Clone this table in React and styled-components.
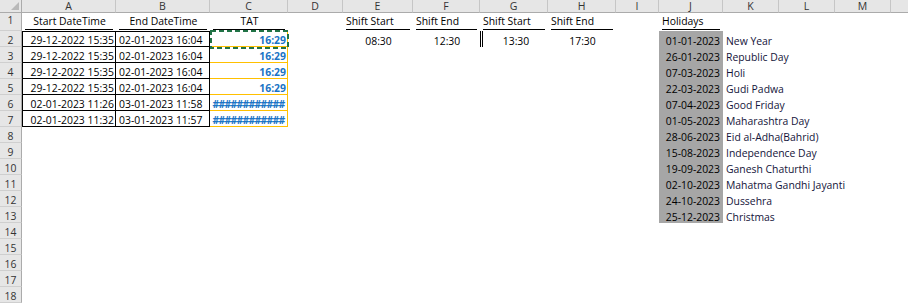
import React from 'react'
import styled, { createGlobalStyle, css } from 'styled-components'

const GlobalStyle = createGlobalStyle`
  html, body {
    margin: 0;
    padding: 0;
    background: #fff;
  }
  body {
    font-family: "Open Sans", "Liberation Sans", sans-serif;
  }
`

// N is only partly on screen, so its letter is not shown
const COLS = [
  { id: 'A', w: 94 },
  { id: 'B', w: 94 },
  { id: 'C', w: 78 },
  { id: 'D', w: 55 },
  { id: 'E', w: 70 },
  { id: 'F', w: 67 },
  { id: 'G', w: 68 },
  { id: 'H', w: 68 },
  { id: 'I', w: 43 },
  { id: 'J', w: 64 },
  { id: 'K', w: 56 },
  { id: 'L', w: 56 },
  { id: 'M', w: 56 },
  { id: 'N', w: 56, hidden: true },
]

const ROW_COUNT = 18
const BLUE = '#1b74c5'
const GOLD = '#ffc000'
const LINE = '1px solid #000'

const holidays = [
  ['01-01-2023', 'New Year'],
  ['26-01-2023', 'Republic Day'],
  ['07-03-2023', 'Holi'],
  ['22-03-2023', 'Gudi Padwa'],
  ['07-04-2023', 'Good Friday'],
  ['01-05-2023', 'Maharashtra Day'],
  ['28-06-2023', 'Eid al-Adha(Bahrid)'],
  ['15-08-2023', 'Independence Day'],
  ['19-09-2023', 'Ganesh Chaturthi'],
  ['02-10-2023', 'Mahatma Gandhi Jayanti'],
  ['24-10-2023', 'Dussehra'],
  ['25-12-2023', 'Christmas'],
]

const times = [
  ['29-12-2022 15:35', '02-01-2023 16:04', '16:29'],
  ['29-12-2022 15:35', '02-01-2023 16:04', '16:29'],
  ['29-12-2022 15:35', '02-01-2023 16:04', '16:29'],
  ['29-12-2022 15:35', '02-01-2023 16:04', '16:29'],
  ['02-01-2023 11:26', '03-01-2023 11:58', '############'],
  ['02-01-2023 11:32', '03-01-2023 11:57', '############'],
]

function buildCells() {
  const cells = {}
  const head = { head: true, ul: true }
  cells.A1 = { ...head, v: 'Start DateTime', align: 'center' }
  cells.B1 = { ...head, v: 'End DateTime', align: 'center' }
  cells.C1 = { ...head, v: 'TAT', align: 'center' }
  cells.E1 = { ...head, v: 'Shift Start' }
  cells.F1 = { ...head, v: 'Shift End' }
  cells.G1 = { ...head, v: 'Shift Start' }
  cells.H1 = { ...head, v: 'Shift End' }
  cells.J1 = { ...head, v: 'Holidays' }

  times.forEach(([start, end, tat], i) => {
    const r = i + 2
    const top = r === 2 ? LINE : undefined
    const hash = tat.startsWith('#')
    cells['A' + r] = { v: start, align: 'right', padR: 1, bt: top, bl: LINE, br: LINE, bb: LINE }
    cells['B' + r] = { v: end, align: 'left', padL: 3, bt: top, br: LINE, bb: LINE }
    cells['C' + r] = {
      v: tat,
      align: hash ? 'center' : 'right',
      padR: 1,
      padL: hash ? 1 : 3,
      bold: true,
      color: BLUE,
      hash,
      br: `1px solid ${GOLD}`,
      bb: `1px solid ${GOLD}`,
      marquee: r === 2,
    }
  })

  cells.E2 = { v: '08:30', align: 'center' }
  cells.F2 = { v: '12:30', align: 'center' }
  cells.G2 = { v: '13:30', align: 'center', bl: '3px double #000' }
  cells.H2 = { v: '17:30', align: 'center' }

  holidays.forEach(([date, name], i) => {
    const r = i + 2
    cells['J' + r] = { v: date, align: 'right', padR: 3, fill: '#a6a6a6' }
    cells['K' + r] = { v: name, color: '#14143a' }
  })
  return cells
}

const CELLS = buildCells()

const Sheet = styled.div`
  width: 908px;
  height: 303px;
  overflow: hidden;
  display: grid;
  grid-template-columns: 22px ${COLS.map((c) => c.w + 'px').join(' ')};
  grid-template-rows: 13px 18px repeat(${ROW_COUNT - 1}, 16px);
  font-size: 10.4px;
  color: #000;
`

const Corner = styled.div`
  position: relative;
  box-sizing: border-box;
  background: #e6e6e6;
  border-right: 1px solid #ababab;
  border-bottom: 1px solid #ababab;
  &::after {
    content: '';
    position: absolute;
    right: 2px;
    bottom: 2px;
    width: 0;
    height: 0;
    border-left: 8px solid transparent;
    border-bottom: 8px solid #b9b9b9;
  }
`

const ColHead = styled.div`
  box-sizing: border-box;
  background: #e6e6e6;
  border-right: 1px solid #c6c6c6;
  border-bottom: 1px solid #ababab;
  display: flex;
  align-items: center;
  justify-content: center;
  font-size: 10.5px;
  line-height: 12px;
  color: #333;
`

const RowHead = styled.div`
  box-sizing: border-box;
  background: #e6e6e6;
  border-right: 1px solid #ababab;
  border-bottom: 1px solid #cfcfcf;
  display: flex;
  align-items: flex-end;
  justify-content: center;
  padding-bottom: ${(p) => (p.$tall ? 4 : 0)}px;
  line-height: 11px;
  color: #333;
`

const justify = { left: 'flex-start', center: 'center', right: 'flex-end' }

const Cell = styled.div`
  position: relative;
  box-sizing: border-box;
  display: flex;
  align-items: flex-end;
  justify-content: ${(p) => justify[p.$align || 'left']};
  padding: 0 ${(p) => p.$padR ?? 2}px ${(p) => (p.$head ? 4 : 0)}px ${(p) => p.$padL ?? 3}px;
  line-height: 11px;
  white-space: nowrap;
  color: ${(p) => p.$color || '#000'};
  font-weight: ${(p) => (p.$bold ? 700 : 400)};
  letter-spacing: ${(p) => (p.$hash ? '-0.7px' : 'normal')};
  background: ${(p) => p.$fill || 'transparent'};
  border-top: ${(p) => p.$bt || 'none'};
  border-right: ${(p) => p.$br || 'none'};
  border-bottom: ${(p) => p.$bb || 'none'};
  border-left: ${(p) => p.$bl || 'none'};
  ${(p) =>
    p.$ul &&
    css`
      &::after {
        content: '';
        position: absolute;
        left: 3px;
        right: 3px;
        bottom: 1px;
        height: 1px;
        background: #000;
      }
    `}
`

const Marquee = styled.svg`
  position: absolute;
  left: 0;
  top: -1px;
  width: 79px;
  height: 19px;
  z-index: 2;
  overflow: visible;
`

function CopyMarquee() {
  return (
    <Marquee viewBox="0 0 79 19">
      <rect x="1" y="1" width="77" height="17" fill="none" stroke="#217346" strokeWidth="2" strokeDasharray="5 3" />
    </Marquee>
  )
}

export default function App() {
  const rows = []
  for (let r = 1; r <= ROW_COUNT; r++) {
    rows.push(
      <React.Fragment key={r}>
        <RowHead $tall={r === 1}>{r}</RowHead>
        {COLS.map((c) => {
          const cell = CELLS[c.id + r]
          if (!cell) return <Cell key={c.id} />
          return (
            <Cell
              key={c.id}
              $align={cell.align}
              $head={cell.head}
              $ul={cell.ul}
              $padL={cell.padL}
              $padR={cell.padR}
              $bold={cell.bold}
              $color={cell.color}
              $hash={cell.hash}
              $fill={cell.fill}
              $bt={cell.bt}
              $br={cell.br}
              $bb={cell.bb}
              $bl={cell.bl}
            >
              {cell.v}
              {cell.marquee && <CopyMarquee />}
            </Cell>
          )
        })}
      </React.Fragment>
    )
  }

  return (
    <>
      <GlobalStyle />
      <Sheet>
        <Corner />
        {COLS.map((c) => (
          <ColHead key={c.id}>{c.hidden ? '' : c.id}</ColHead>
        ))}
        {rows}
      </Sheet>
    </>
  )
}
